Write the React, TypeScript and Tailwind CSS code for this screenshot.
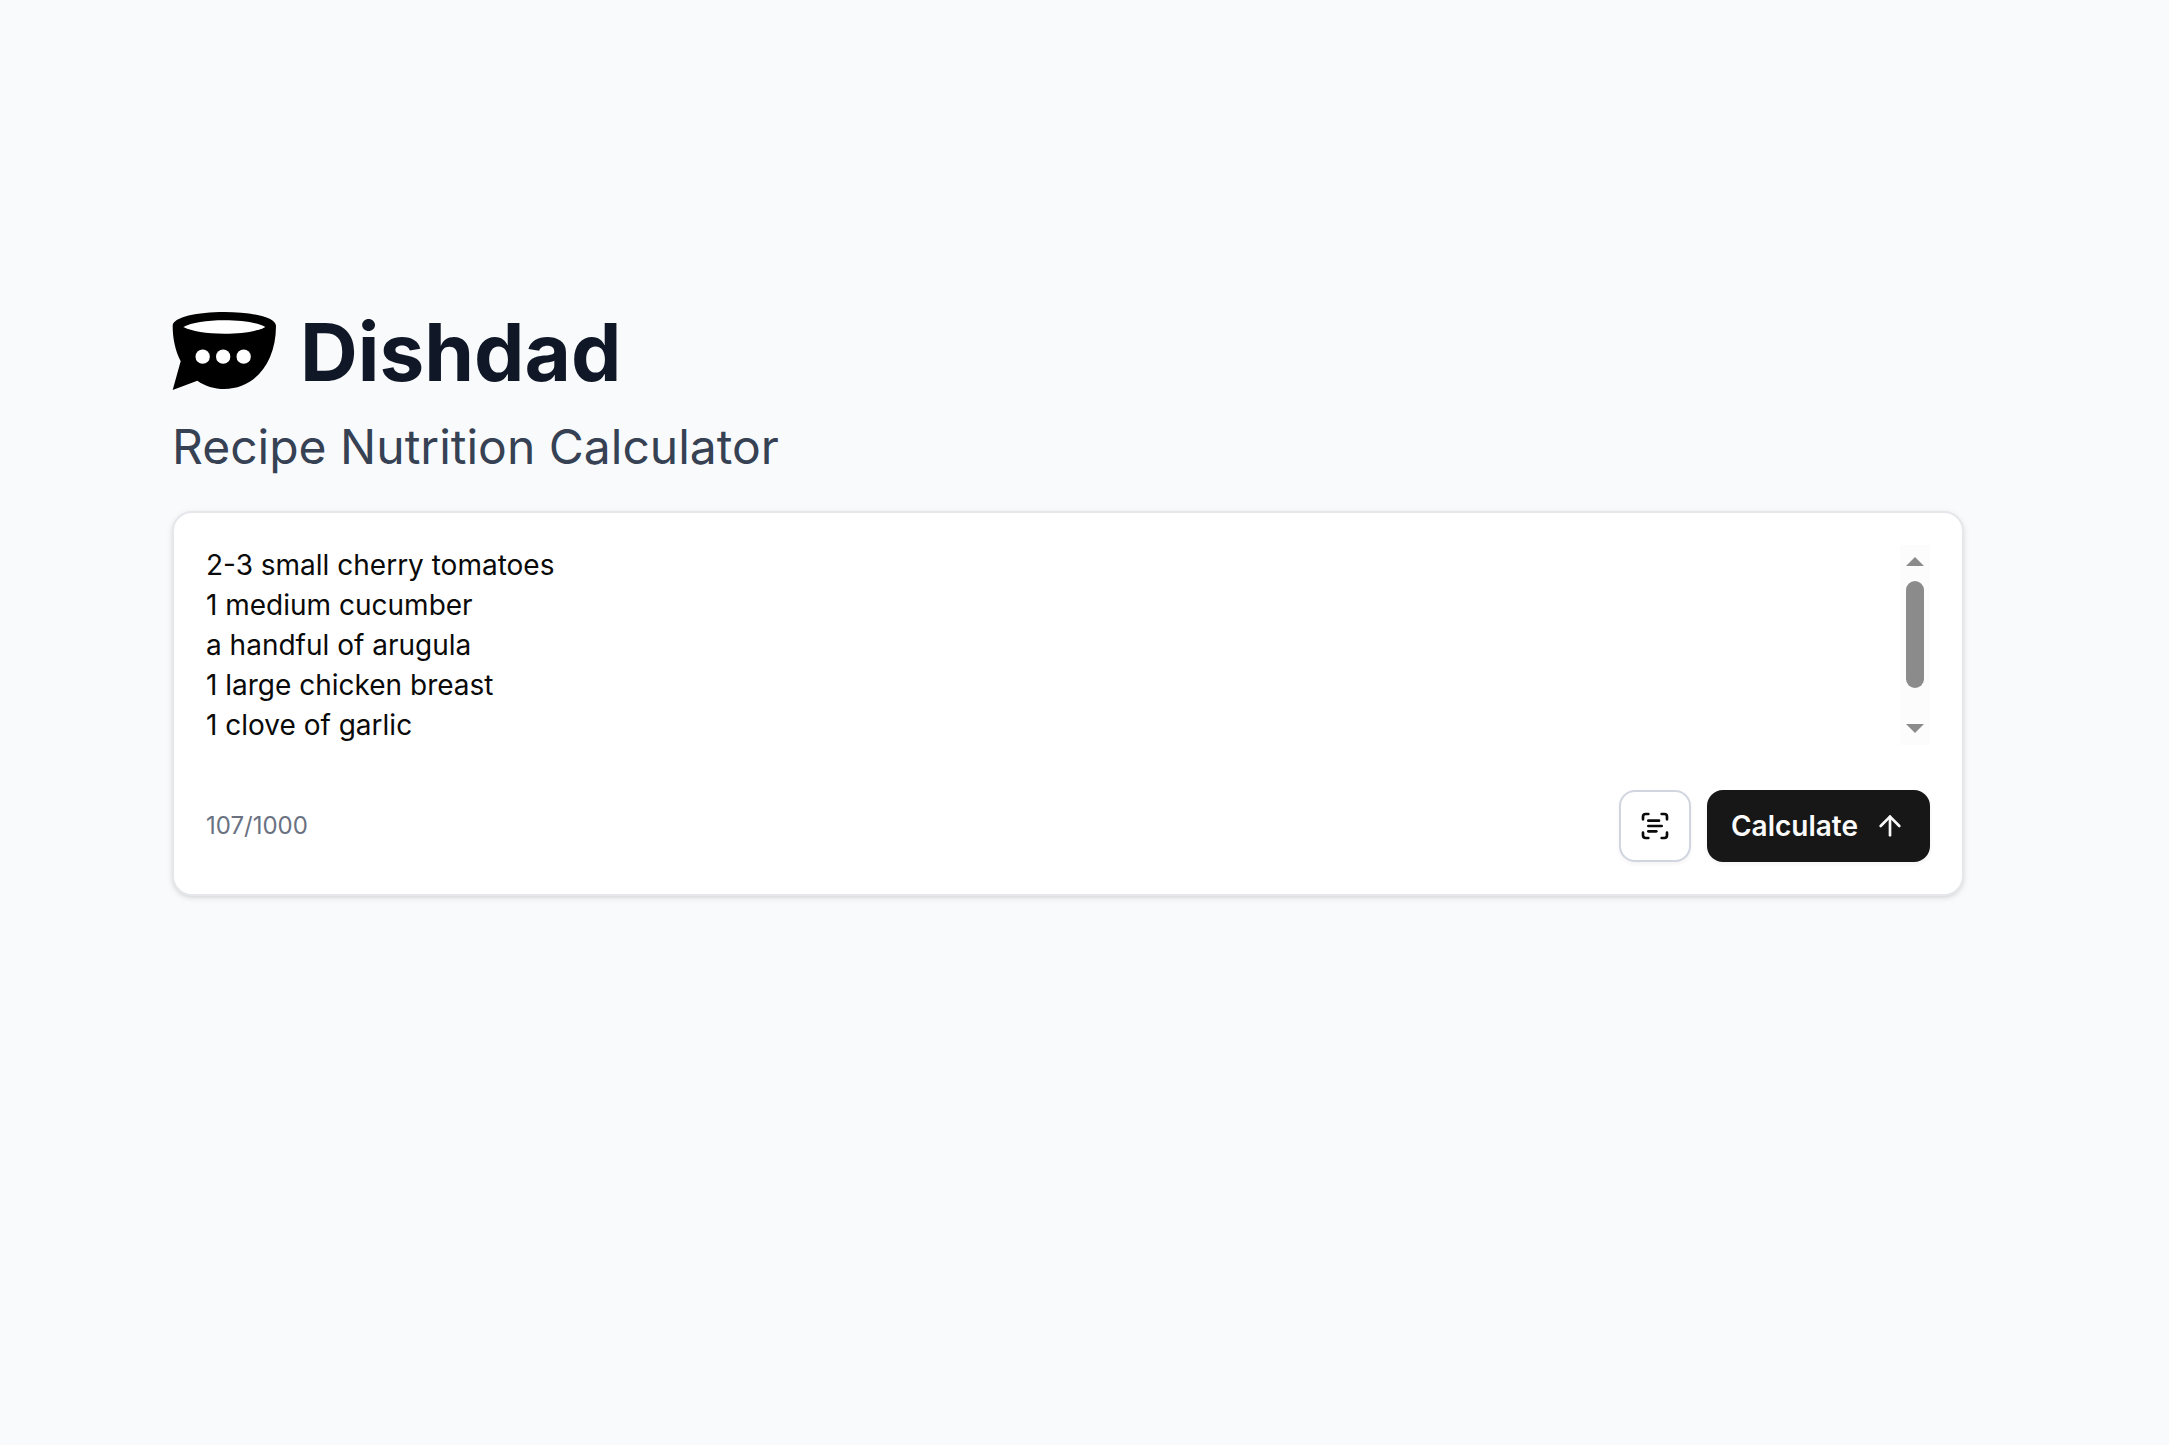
import { ArrowUp, ScanText } from 'lucide-react'

const ingredients = [
  '2-3 small cherry tomatoes',
  '1 medium cucumber',
  'a handful of arugula',
  '1 large chicken breast',
  '1 clove of garlic',
]

function Logo() {
  return (
    <svg viewBox="36 36 312 234" className="mb-0.5 h-[78px] w-[104px] shrink-0" aria-hidden="true">
      <path
        fill="#000"
        d="M38 77C40 51 112 36 193 36s153 15 155 41c0 109-62 190-155 190-30 0-58-9-81-25L38 270l24-86C46 152 38 117 38 77Z"
      />
      <path fill="#fff" d="M70 81c24-13 70-20 123-20s99 7 123 20c-24 13-70 20-123 20S94 94 70 81Z" />
      <circle cx="128" cy="170" r="21.5" fill="#fff" />
      <circle cx="189.5" cy="170" r="21.5" fill="#fff" />
      <circle cx="251" cy="170" r="21.5" fill="#fff" />
    </svg>
  )
}

function Scrollbar() {
  return (
    <div className="flex h-[200px] w-[30px] flex-col items-center bg-[#fcfcfc] pt-3 pb-3">
      <svg viewBox="0 0 18 9" className="h-[9px] w-[18px]">
        <path d="M9 0l9 9H0z" fill="#8b8b8b" />
      </svg>
      <div className="mt-[15px] h-[107px] w-[18px] rounded-full bg-[#8b8b8b]" />
      <svg viewBox="0 0 18 9" className="mt-auto h-[9px] w-[18px]">
        <path d="M0 0h18L9 9z" fill="#8b8b8b" />
      </svg>
    </div>
  )
}

export default function App() {
  return (
    <main className="min-h-screen bg-[#f9fafc] pt-[304px] pl-[172px] font-['Inter',sans-serif]">
      <div className="w-[1792px]">
        <header>
          <div className="flex h-24 items-center gap-6">
            <Logo />
            <h1 className="text-[80px] leading-24 font-bold text-gray-900">Dishdad</h1>
          </div>
          <p className="mt-[15px] text-5xl leading-16 text-gray-700">Recipe Nutrition Calculator</p>
        </header>

        <section className="mt-8 rounded-[20px] border-2 border-gray-200 bg-white p-8 shadow-[0_2px_6px_rgba(0,0,0,0.1),0_2px_4px_-2px_rgba(0,0,0,0.1)]">
          <div className="flex justify-between">
            <div className="text-[28px] leading-10 text-neutral-950">
              {ingredients.map(line => (
                <p key={line}>{line}</p>
              ))}
            </div>
            <Scrollbar />
          </div>

          <div className="mt-[45px] flex items-center justify-between">
            <span className="text-2xl leading-8 text-gray-500">107/1000</span>
            <div className="flex gap-4">
              <button
                type="button"
                aria-label="Scan recipe"
                className="flex size-[72px] items-center justify-center rounded-2xl border-2 border-[#d0d5df] bg-white text-neutral-950 shadow-[0_2px_4px_rgba(0,0,0,0.05)]"
              >
                <ScanText className="size-8" />
              </button>
              <button
                type="button"
                className="flex h-[72px] items-center gap-4 rounded-2xl bg-neutral-900 px-6 text-[28px] leading-10 font-semibold text-neutral-50 shadow-[0_2px_4px_rgba(0,0,0,0.05)]"
              >
                Calculate
                <ArrowUp className="size-8" />
              </button>
            </div>
          </div>
        </section>
      </div>
    </main>
  )
}
